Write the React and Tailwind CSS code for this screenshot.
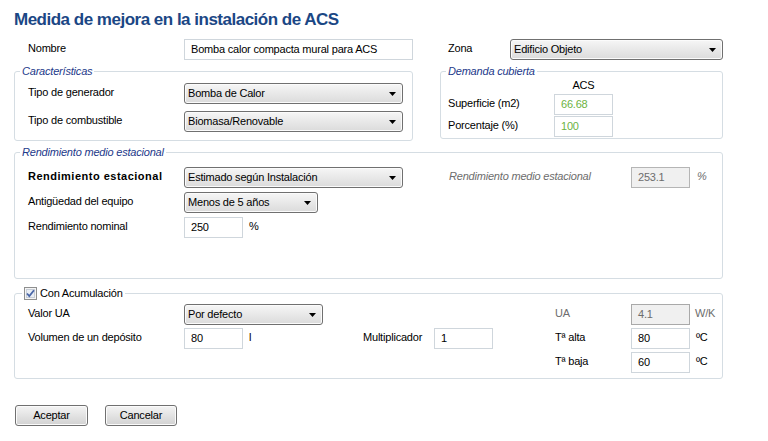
import React from 'react';

const Arrow = () => (
  <svg width="7" height="4" viewBox="0 0 7 4">
    <path d="M0 0h7L3.5 4z" fill="#000" />
  </svg>
);

const Sel = ({ w, children }) => (
  <div className={`${w} h-[21px] flex items-center justify-between border border-[#707070] rounded-[3px] bg-linear-to-b from-[#f6f6f6] to-[#dbdbdb] shadow-[inset_0_0_0_1px_#fbfbfb] pl-[3px] pr-[6px]`}>
    <span>{children}</span>
    <Arrow />
  </div>
);

const Box = ({ w = 'w-[59px]', cls = 'border-[#cfd6dc] bg-white', children }) => (
  <div className={`${w} h-[21px] flex items-center pl-[6px] border ${cls}`}>{children}</div>
);

const Label = ({ w = 'w-[156px]', cls = '', children }) => (
  <div className={`${w} pb-[3px] ${cls}`}>{children}</div>
);

const Legend = ({ children }) => (
  <legend className="ml-[5px] px-[2px] italic text-[#23398a] leading-[13px]">{children}</legend>
);

const Btn = ({ w, children }) => (
  <button className={`${w} h-[21px] border border-[#707070] rounded-[3px] bg-linear-to-b from-[#f4f4f4] to-[#d2d2d2] shadow-[inset_0_0_0_1px_#fbfbfb] text-center`}>
    {children}
  </button>
);

export default function App() {
  return (
    <div className="w-[768px] h-[441px] bg-white text-black text-[11px] leading-[13px] tracking-[-0.2px] font-['Liberation_Sans',Arial,sans-serif] overflow-hidden">
      {/* titulo */}
      <div className="pl-[14px] pt-[10px]">
        <h1 className="text-[17px] leading-[20px] font-bold tracking-[-0.5px] text-[#1b4785]">
          Medida de mejora en la instalación de ACS
        </h1>
      </div>

      {/* nombre / zona */}
      <div className="mt-[9px] flex items-center pl-[28px]">
        <Label>Nombre</Label>
        <Box w="w-[229px]">Bomba calor compacta mural para ACS</Box>
        <Label w="w-[62px] ml-[35px]">Zona</Label>
        <Sel w="w-[213px]">Edificio Objeto</Sel>
      </div>

      {/* caracteristicas + demanda */}
      <div className="mt-[5px] flex pl-[14px]">
        <fieldset className="w-[399px] h-[76px] border border-[#d5dde3] rounded-[3px]">
          <Legend>Características</Legend>
          <div className="pl-[13px] pt-[5px] flex flex-col gap-[7px]">
            <div className="flex items-center">
              <Label>Tipo de generador</Label>
              <Sel w="w-[219px]">Bomba de Calor</Sel>
            </div>
            <div className="flex items-center">
              <Label>Tipo de combustible</Label>
              <Sel w="w-[219px]">Biomasa/Renovable</Sel>
            </div>
          </div>
        </fieldset>

        <fieldset className="ml-[27px] w-[283px] h-[74px] border border-[#d5dde3] rounded-[3px]">
          <Legend>Demanda cubierta</Legend>
          <div className="pl-[7px] pt-[1px]">
            <div className="flex">
              <div className="w-[106px]" />
              <div className="w-[59px] text-center">ACS</div>
            </div>
            <div className="mt-[2px] flex flex-col gap-[1px]">
              <div className="flex items-center">
                <Label w="w-[106px]">Superficie (m2)</Label>
                <Box cls="border-[#cfd6dc] text-[#6cb33f]">66.68</Box>
              </div>
              <div className="flex items-center">
                <Label w="w-[106px]">Porcentaje (%)</Label>
                <Box cls="border-[#cfd6dc] text-[#6cb33f]">100</Box>
              </div>
            </div>
          </div>
        </fieldset>
      </div>

      {/* rendimiento */}
      <div className="mt-[5px] pl-[14px]">
        <fieldset className="w-[709px] h-[133px] border border-[#d5dde3] rounded-[3px]">
          <Legend>Rendimiento medio estacional</Legend>
          <div className="pl-[13px] pt-[8px] flex flex-col gap-[4px]">
            <div className="flex items-center">
              <Label cls="font-bold tracking-[0.5px]">Rendimiento estacional</Label>
              <Sel w="w-[219px]">Estimado según Instalación</Sel>
              <Label w="w-[182px] ml-[46px]" cls="italic text-[#6d6d6d]">Rendimiento medio estacional</Label>
              <Box cls="border-[#b5b5b5] bg-[#f0f0f0] text-[#6d6d6d]">253.1</Box>
              <span className="ml-[7px] pb-[3px] italic text-[#6d6d6d]">%</span>
            </div>
            <div className="flex items-center">
              <Label>Antigüedad del equipo</Label>
              <Sel w="w-[134px]">Menos de 5 años</Sel>
            </div>
            <div className="flex items-center">
              <Label>Rendimiento nominal</Label>
              <Box>250</Box>
              <span className="ml-[6px] pb-[3px]">%</span>
            </div>
          </div>
        </fieldset>
      </div>

      {/* acumulacion */}
      <div className="mt-[7px] pl-[14px]">
        <fieldset className="w-[709px] h-[93px] border border-[#d5dde3] rounded-[3px]">
          <legend className="ml-[7px] px-[2px] flex items-center gap-[3px] leading-[14px]">
            <svg width="13" height="13" viewBox="0 0 13 13">
              <rect x="0.5" y="0.5" width="12" height="12" fill="#f4f4f4" stroke="#8e8f8f" />
              <rect x="2.5" y="2.5" width="8" height="8" fill="#e9eef5" stroke="#c7cdd6" />
              <path d="M3 6.5l2.3 2.6L10 3.2" fill="none" stroke="#4a67a8" strokeWidth="1.8" />
            </svg>
            <span>Con Acumulación</span>
          </legend>
          <div className="pl-[13px] pt-[4px] flex flex-col gap-[3px]">
            <div className="flex items-center">
              <Label>Valor UA</Label>
              <Sel w="w-[139px]">Por defecto</Sel>
              <div className="w-[232px]" />
              <Label w="w-[76px]" cls="text-[#6d6d6d]">UA</Label>
              <Box cls="border-[#a9a9a9] bg-[#f0f0f0] text-[#6d6d6d]">4.1</Box>
              <span className="ml-[5px] pb-[3px] text-[#6d6d6d]">W/K</span>
            </div>
            <div className="flex items-center">
              <Label>Volumen de un depósito</Label>
              <Box>80</Box>
              <span className="ml-[6px] w-[114px] pb-[3px]">l</span>
              <Label w="w-[71px]">Multiplicador</Label>
              <Box>1</Box>
              <div className="w-[62px]" />
              <Label w="w-[76px]">Tª alta</Label>
              <Box>80</Box>
              <span className="ml-[6px] pb-[3px]">ºC</span>
            </div>
            <div className="flex items-center">
              <div className="w-[527px]" />
              <Label w="w-[76px]">Tª baja</Label>
              <Box>60</Box>
              <span className="ml-[6px] pb-[3px]">ºC</span>
            </div>
          </div>
        </fieldset>
      </div>

      {/* botones */}
      <div className="mt-[26px] pl-[15px] flex gap-[17px]">
        <Btn w="w-[73px]">Aceptar</Btn>
        <Btn w="w-[72px]">Cancelar</Btn>
      </div>
    </div>
  );
}
